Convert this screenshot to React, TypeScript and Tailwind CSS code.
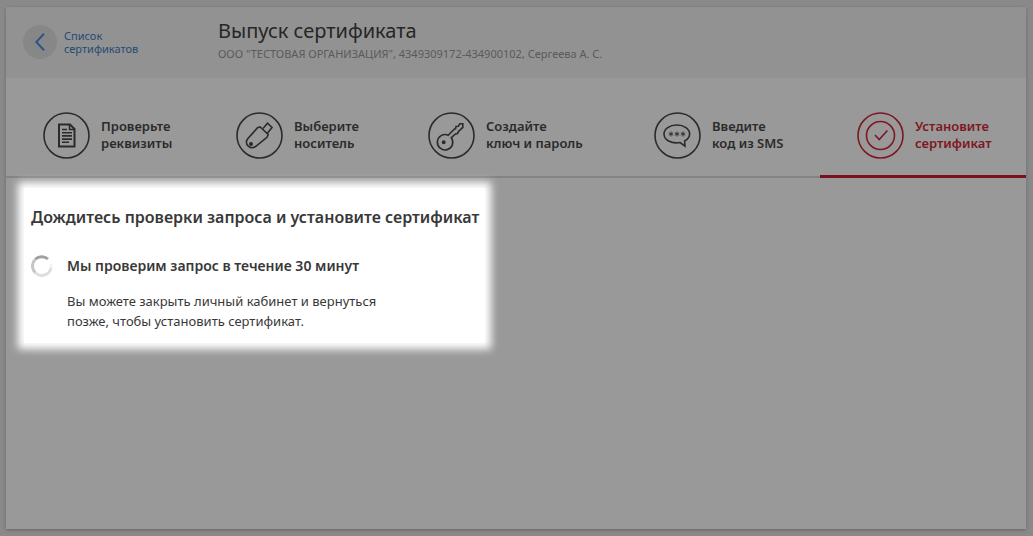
import type { ReactNode } from "react";
import clsx from "clsx";

type Step = {
  lines: [string, string];
  icon: ReactNode;
};

const steps: Step[] = [
  {
    lines: ["Проверьте", "реквизиты"],
    icon: (
      <>
        <path strokeWidth="2" d="M16 12.5h11l4.5 4.5v17.5H16z" />
        <path d="M26.5 12.5v5h5" />
        <path d="M19 17.5h5M19 20.7h10M19 23.9h10M19 27.1h10M19 30.3h7" />
      </>
    ),
  },
  {
    lines: ["Выберите", "носитель"],
    icon: (
      <>
        <path d="M24.2 15l8 7.5-1.200 2.800L19.500 34.500c-5 3.500-11.500-2-8-7.500L21.500 15.800z" />
        <path d="M27 16.500l4.500-5.300 4.500 4.300-4.500 5.500" />
        <circle cx="15" cy="32" r="1.200" fill="currentColor" />
      </>
    ),
  },
  {
    lines: ["Создайте", "ключ и пароль"],
    icon: (
      <>
        <path d="M20.200 23.200L26.500 17l1-.200.500-2.300 2.300-.200 1.500-2.500h3v3.500l-4.500 4.500-.800 1.700-2 .500-4.200 3.700A7.700 7.700 0 1 1 20.200 23.200z" />
        <circle cx="15.700" cy="30.300" r="1.200" fill="currentColor" />
      </>
    ),
  },
  {
    lines: ["Введите", "код из SMS"],
    icon: (
      <>
        <path d="M26 30.5c-9 1.500-16-2.500-16-8.500 0-5 5.500-9 12.800-9s12.800 4 12.800 9c0 3-2 5.500-5 7l.400 5z" />
        <path
          strokeWidth="0.9"
          d="M17 19.500v5M14.800 20.800l4.400 2.400M19.200 20.800l-4.400 2.400M23 19.500v5M20.800 20.800l4.400 2.400M25.200 20.800l-4.400 2.400M29 19.500v5M26.800 20.800l4.400 2.400M31.200 20.800l-4.400 2.400"
        />
      </>
    ),
  },
  {
    lines: ["Установите", "сертификат"],
    icon: (
      <>
        <circle cx="23.5" cy="23.5" r="14" />
        <path d="M18 23l4.200 4.500 8.200-9" />
      </>
    ),
  },
];

const activeStep = 4;

function StepItem({ step, active }: { step: Step; active: boolean }) {
  return (
    <li
      aria-current={active ? "step" : undefined}
      className={clsx(
        "flex gap-[11px] pl-[37px] pt-[34px]",
        active
          ? "border-b-[3px] border-[#7a101c] text-[#7f1722]"
          : "border-b-2 border-[#838383] text-[#2b2b2b]"
      )}
    >
      <svg
        viewBox="0 0 47 47"
        className="size-[47px] shrink-0"
        fill="none"
        stroke="currentColor"
        strokeWidth="1.6"
      >
        <circle cx="23.5" cy="23.5" r="22.5" />
        {step.icon}
      </svg>
      <span className="whitespace-nowrap pt-[6px] text-[13px] font-semibold leading-[17px]">
        {step.lines[0]}
        <br />
        {step.lines[1]}
      </span>
    </li>
  );
}

function Spinner() {
  return (
    <svg viewBox="0 0 22 22" className="size-[22px] shrink-0" fill="none" strokeWidth="3">
      <path d="M4.300 17.700A9.300 9.300 0 0 0 20 13" stroke="#dedede" />
      <path d="M20 13a9.300 9.300 0 0 0 0-4" stroke="#f4f4f4" />
      <path d="M4.300 4.300a9.300 9.300 0 0 0 0 13.400" stroke="#c6c6c6" />
      <path d="M4.300 4.300A9.300 9.300 0 0 1 17 4" stroke="#a0a0a0" />
    </svg>
  );
}

export default function App() {
  return (
    <div className="flex min-h-screen flex-col bg-[#898989] px-[6px] py-[7px] font-['Noto_Sans',sans-serif]">
      <div className="mr-px flex flex-1 flex-col bg-[#999999] shadow-[0_1px_3px_#666666]">
        <header className="flex h-[71px] bg-[#929292]">
          <a
            href="#"
            className="flex w-[212px] shrink-0 items-start gap-[7px] pl-[17px] pt-[18px] text-[#254a75]"
          >
            <span className="flex size-[34px] shrink-0 items-center justify-center rounded-full bg-[#878787]">
              <svg
                viewBox="0 0 10 18"
                className="h-[18px] w-[10px]"
                fill="none"
                stroke="#2f5487"
                strokeWidth="2"
              >
                <path d="M9 .8L1.300 9 9 17.200" />
              </svg>
            </span>
            <span className="pt-[4px] text-[11px] leading-[13px]">
              Список
              <br />
              сертификатов
            </span>
          </a>
          <div className="min-w-0 pt-[10px]">
            <h1 className="text-[20px] leading-[28px] text-[#262626]">
              Выпуск сертификата
            </h1>
            <p className="text-[11px] leading-[18px] text-[#5a5a5a]">
              ООО "ТЕСТОВАЯ ОРГАНИЗАЦИЯ", 4349309172-434900102, Сергеева А. С.
            </p>
          </div>
        </header>

        <ol className="grid h-[100px] grid-cols-[193fr_192fr_226fr_203fr_206fr]">
          {steps.map((step, i) => (
            <StepItem key={step.lines[0]} step={step} active={i === activeStep} />
          ))}
        </ol>

        <main className="px-[18px] pt-[10px]">
          {/* Highlighted area, the glow spreads past its edges */}
          <section className="w-[461px] max-w-full bg-white px-[7px] pb-[12px] pt-[18px] text-[#383838] shadow-[0_0_8px_6px_#ffffff]">
            <h2 className="whitespace-nowrap text-[16px] font-semibold leading-[22px]">
              Дождитесь проверки запроса и установите сертификат
            </h2>
            <div className="mt-[27px] flex gap-[14px]">
              <Spinner />
              <div>
                <h3 className="text-[14px] font-semibold leading-[22px]">
                  Мы проверим запрос в течение 30 минут
                </h3>
                <p className="mt-[14px] text-[13px] leading-[20px]">
                  Вы можете закрыть личный кабинет и вернуться
                  <br />
                  позже, чтобы установить сертификат.
                </p>
              </div>
            </div>
          </section>
        </main>
      </div>
    </div>
  );
}
